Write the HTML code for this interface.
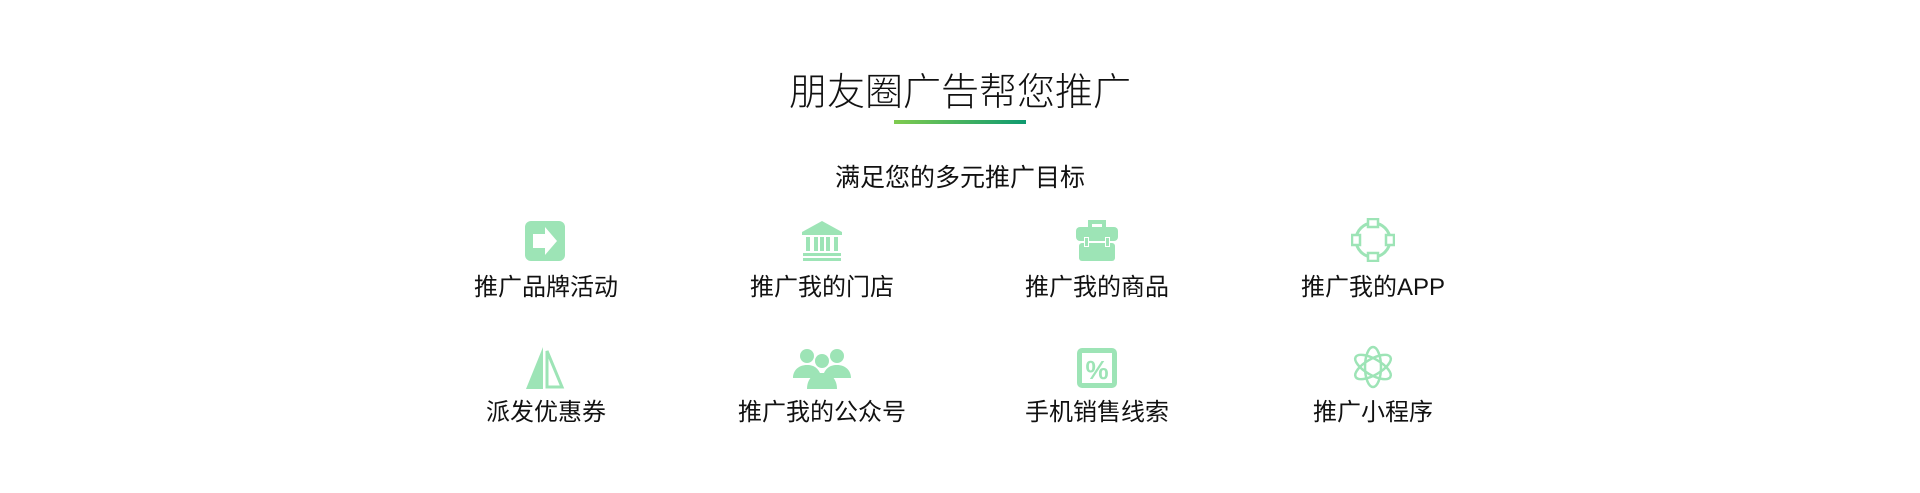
<!DOCTYPE html>
<html><head><meta charset="utf-8"><style>
body{margin:0;width:1920px;height:493px;background:#fff;position:relative;overflow:hidden;font-family:"Liberation Sans","Noto Sans CJK SC",sans-serif;color:#111}
.t{position:absolute;left:0;width:1920px;text-align:center;white-space:nowrap}
.lbl{position:absolute;width:240px;text-align:center;font-size:24px;line-height:30px;white-space:nowrap}
.ic{position:absolute;width:44px;height:44px}
</style></head><body>
<div class="t" style="top:68px;font-size:38px;line-height:50px;font-weight:300;left:0">朋友圈广告帮您推广</div>
<div style="position:absolute;left:894px;top:120px;width:132px;height:4px;background:linear-gradient(90deg,#7fcb4f,#0e9a70)"></div>
<div class="t" style="top:161px;font-size:25px;line-height:34px">满足您的多元推广目标</div>

<svg class="ic" style="left:523px;top:219px" viewBox="0 0 44 44"><rect x="2" y="2" width="40" height="40" rx="6" fill="#9de4b6"/><path d="M10 15h12v-7l12 14-12 14v-7H10z" fill="#fff"/></svg>
<svg class="ic" style="left:800px;top:219px" viewBox="0 0 44 44"><path d="M22 2L2 13v3h40v-3z" fill="#9de4b6"/><rect x="6" y="18" width="4" height="14" fill="#9de4b6"/><rect x="14" y="18" width="4" height="14" fill="#9de4b6"/><rect x="26" y="18" width="4" height="14" fill="#9de4b6"/><rect x="34" y="18" width="4" height="14" fill="#9de4b6"/><rect x="20" y="18" width="4" height="14" fill="#9de4b6"/><rect x="3" y="34" width="38" height="3" fill="#9de4b6"/><rect x="3" y="39" width="38" height="3" fill="#9de4b6"/></svg>
<svg class="ic" style="left:1075px;top:218px" viewBox="0 0 44 44"><path d="M15 9V4h14v5" fill="none" stroke="#9de4b6" stroke-width="4"/><rect x="1" y="9" width="42" height="14" rx="4" fill="#9de4b6"/><rect x="4" y="25" width="36" height="18" rx="3" fill="#9de4b6"/><rect x="9" y="19" width="5" height="10" fill="#fff"/><rect x="30" y="19" width="5" height="10" fill="#fff"/><rect x="10" y="20" width="3" height="8" fill="#9de4b6"/><rect x="31" y="20" width="3" height="8" fill="#9de4b6"/><rect x="13" y="23" width="18" height="2" fill="#fff"/></svg>
<svg class="ic" style="left:1351px;top:218px" viewBox="0 0 44 44"><circle cx="22" cy="22" r="17" fill="none" stroke="#9de4b6" stroke-width="3"/><g fill="#fff" stroke="#9de4b6" stroke-width="2.5"><rect x="17" y="1" width="10" height="8"/><rect x="17" y="35" width="10" height="8"/><rect x="1" y="17" width="8" height="10"/><rect x="35" y="17" width="8" height="10"/></g></svg>

<div class="lbl" style="left:426px;top:273px">推广品牌活动</div>
<div class="lbl" style="left:702px;top:273px">推广我的门店</div>
<div class="lbl" style="left:977px;top:273px">推广我的商品</div>
<div class="lbl" style="left:1253px;top:273px">推广我的APP</div>

<svg class="ic" style="left:523px;top:345px" viewBox="0 0 44 44"><path d="M20 2L3 44h17z" fill="#9de4b6"/><path d="M24 6v36h15z" fill="none" stroke="#9de4b6" stroke-width="3"/></svg>
<svg class="ic" style="left:793px;top:347px;width:58px" viewBox="0 0 58 44"><circle cx="14" cy="9" r="7" fill="#9de4b6"/><circle cx="44" cy="9" r="7" fill="#9de4b6"/><circle cx="29" cy="14" r="7" fill="#9de4b6"/><path d="M0 31c0-8 6-13 14-13s11 4 13 8h4c2-4 5-8 13-8s14 5 14 13z" fill="#9de4b6"/><path d="M14 42c0-10 6-16 15-16s15 6 15 16z" fill="#9de4b6"/></svg>
<svg class="ic" style="left:1075px;top:346px" viewBox="0 0 44 44"><rect x="2" y="2" width="40" height="40" rx="5" fill="#9de4b6"/><rect x="7" y="7" width="30" height="30" fill="#fff"/><text x="22" y="33" text-anchor="middle" font-size="26" font-family="Liberation Sans" font-weight="bold" fill="#9de4b6">%</text></svg>
<svg class="ic" style="left:1351px;top:345px" viewBox="0 0 44 44"><g fill="none" stroke="#9de4b6" stroke-width="2.5"><ellipse cx="22" cy="22" rx="8" ry="20"/><ellipse cx="22" cy="22" rx="8" ry="20" transform="rotate(60 22 22)"/><ellipse cx="22" cy="22" rx="8" ry="20" transform="rotate(-60 22 22)"/></g></svg>

<div class="lbl" style="left:426px;top:398px">派发优惠券</div>
<div class="lbl" style="left:702px;top:398px">推广我的公众号</div>
<div class="lbl" style="left:977px;top:398px">手机销售线索</div>
<div class="lbl" style="left:1253px;top:398px">推广小程序</div>
</body></html>
